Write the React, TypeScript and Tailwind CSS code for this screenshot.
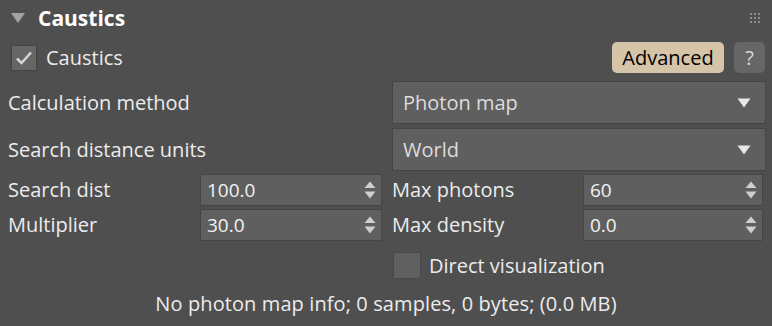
const font = { fontFamily: '"Open Sans", "Noto Sans", sans-serif' };

function Spinner({ value, width }: { value: string; width: string }) {
  return (
    <div
      className={`${width} flex h-[32px] items-center justify-between border border-[#454545] bg-[#5f5f5f] pl-[6px] pr-[5px] text-[19px] leading-none text-[#f2f2f2]`}
    >
      <span>{value}</span>
      <svg width="12" height="18" viewBox="0 0 12 18">
        <path d="M6 0.5 L11.5 7 L0.5 7 Z" fill="#cfcfcf" />
        <path d="M0.5 10.5 L11.5 10.5 L6 17.5 Z" fill="#cfcfcf" />
      </svg>
    </div>
  );
}

function Dropdown({ value }: { value: string }) {
  return (
    <div className="mr-[6px] flex h-[43px] w-[374px] items-center justify-between border border-[#454545] bg-[#5f5f5f] pl-[10px] pr-[14px] text-[20px] leading-none text-[#dcdcdc]">
      <span>{value}</span>
      <svg width="14" height="10" viewBox="0 0 14 10">
        <path d="M0.5 0.5 L13.5 0.5 L7 9.5 Z" fill="#e8e8e8" />
      </svg>
    </div>
  );
}

export default function App() {
  return (
    <div style={font} className="flex h-[326px] w-[772px] flex-col bg-[#4f4f4f] text-[#ececec]">
      <div className="flex h-[36px] items-center pl-[11px] pr-[12px]">
        <svg width="14" height="10" viewBox="0 0 14 10">
          <path d="M0 0 L14 0 L7 10 Z" fill="#a3a3a3" />
        </svg>
        <span className="ml-[13px] text-[21px] leading-none font-bold text-white">Caustics</span>
        <div className="ml-auto grid grid-cols-3 gap-[2px]">
          {Array.from({ length: 9 }).map((_, i) => (
            <span key={i} className="h-[2px] w-[2px] bg-[#8c8c8c]" />
          ))}
        </div>
      </div>

      <div className="mt-[6px] flex h-[31px] items-center pl-[11px] pr-[7px]">
        <div className="flex h-[26px] w-[26px] items-center justify-center border border-[#444] bg-[#666]">
          <svg width="18" height="16" viewBox="0 0 18 16">
            <path d="M2 8.5 L6.5 13 L16 2.5" stroke="#d6d6d6" strokeWidth="2.5" fill="none" />
          </svg>
        </div>
        <span className="ml-[9px] text-[20px] leading-none">Caustics</span>
        <button className="ml-auto h-[31px] w-[112px] rounded-[5px] bg-[#d5c4a8] text-[20px] leading-none text-black">
          Advanced
        </button>
        <button className="ml-[10px] h-[31px] w-[31px] rounded-[5px] bg-[#666] text-[20px] leading-none text-[#d8d8d8]">
          ?
        </button>
      </div>

      <div className="mt-[8px] flex flex-col gap-[4px]">
        <div className="flex items-center pl-[8px]">
          <span className="flex-1 text-[20px] leading-none">Calculation method</span>
          <Dropdown value="Photon map" />
        </div>
        <div className="flex items-center pl-[8px]">
          <span className="flex-1 text-[20px] leading-none">Search distance units</span>
          <Dropdown value="World" />
        </div>
      </div>

      <div className="mt-[3px] flex flex-col gap-[3px]">
        <div className="flex items-center pl-[8px]">
          <span className="w-[192px] text-[20px] leading-none">Search dist</span>
          <Spinner value="100.0" width="w-[182px]" />
          <span className="ml-[10px] w-[191px] text-[20px] leading-none">Max photons</span>
          <Spinner value="60" width="w-[180px]" />
        </div>
        <div className="flex items-center pl-[8px]">
          <span className="w-[192px] text-[20px] leading-none">Multiplier</span>
          <Spinner value="30.0" width="w-[182px]" />
          <span className="ml-[10px] w-[191px] text-[20px] leading-none">Max density</span>
          <Spinner value="0.0" width="w-[180px]" />
        </div>
      </div>

      <div className="mt-[11px] flex h-[27px] items-center pl-[393px]">
        <div className="h-[27px] w-[28px] border border-[#484848] bg-[#606060]" />
        <span className="ml-[8px] text-[20px] leading-none">Direct visualization</span>
      </div>

      <div className="mt-[15px] text-center text-[20px] leading-none tracking-[0.1px]">
        No photon map info; 0 samples, 0 bytes; (0.0 MB)
      </div>
    </div>
  );
}
